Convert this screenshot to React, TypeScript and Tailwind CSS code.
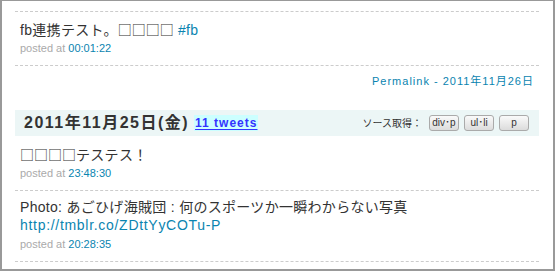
const font = { fontFamily: '"Liberation Sans", "Noto Sans CJK JP", sans-serif' };
const cjk = { fontFamily: '"Noto Sans CJK JP", sans-serif' };

function PostedAt({ time }: { time: string }) {
  return (
    <div className="h-[20px] text-[11px] leading-[20px] text-[#aaa]">
      posted at <a className="text-[#0a84b0]">{time}</a>
    </div>
  );
}

function Boxes() {
  return (
    <span style={cjk} className="tracking-[0px]">
      □□□□
    </span>
  );
}

function SrcButton({ label }: { label: string }) {
  return (
    <span className="inline-flex h-[16px] w-[30px] items-center justify-center whitespace-nowrap rounded-[3px] border border-[#aaa] bg-gradient-to-b from-[#fafafa] to-[#dcdcdc] text-[10px] leading-none text-[#333]">
      {label}
    </span>
  );
}

export default function App() {
  return (
    <div
      style={font}
      className="box-border h-[271px] w-[555px] border-x-2 border-b-2 border-t border-[#999] bg-white pl-[13px] pr-[14px] pt-[10px]"
    >
      <div className="border-t border-dashed border-[#ccc] pl-[5px] pt-[8px] pb-[7px]">
        <div className="h-[18px] text-[14px] leading-[18px] tracking-[0.3px] text-[#333]">
          fb連携テスト。<Boxes /> <a className="text-[#0a84b0]">#fb</a>
        </div>
        <PostedAt time="00:01:22" />
      </div>

      <div className="border-t border-dashed border-[#ccc] pr-[5px] pt-[8px] text-right text-[11px] leading-[14px] tracking-[1px] text-[#0a84b0]">
        Permalink - 2011年11月26日
      </div>

      <div className="mt-[22px] flex h-[26px] items-center justify-between bg-[#ecf6f6] pl-[9px] pr-[10px]">
        <div className="flex items-center gap-[5px]">
          <span className="text-[16px] font-bold leading-[20px] tracking-[1.5px] text-[#333]">
            2011年11月25日(金)
          </span>
          <a className="bg-[#ccffff] px-[1px] text-[12px] font-bold leading-[16px] tracking-[1px] text-[#3333ff] underline decoration-[1px] underline-offset-[2px]">
            11 tweets
          </a>
        </div>
        <div className="flex items-center gap-[5px] text-[10px] text-[#333]">
          <span className="mr-[2px]">ソース取得：</span>
          <SrcButton label="div･p" />
          <SrcButton label="ul･li" />
          <SrcButton label="p" />
        </div>
      </div>

      <div className="pl-[5px] pt-[9px] pb-[7px]">
        <div className="h-[18px] text-[14px] leading-[18px] tracking-[0.3px] text-[#333]">
          <Boxes />
          テステス！
        </div>
        <PostedAt time="23:48:30" />
      </div>

      <div className="border-t border-dashed border-[#ccc] pl-[5px] pt-[7px] pb-[7px]">
        <div className="text-[14px] leading-[18px] text-[#333]">
          <div className="tracking-[0.3px]">Photo: あごひげ海賊団 : 何のスポーツか一瞬わからない写真</div>
          <a className="block tracking-[0.7px] text-[#0a84b0]">http://tmblr.co/ZDttYyCOTu-P</a>
        </div>
        <PostedAt time="20:28:35" />
      </div>
      <div className="border-t border-dashed border-[#ccc]" />
    </div>
  );
}
